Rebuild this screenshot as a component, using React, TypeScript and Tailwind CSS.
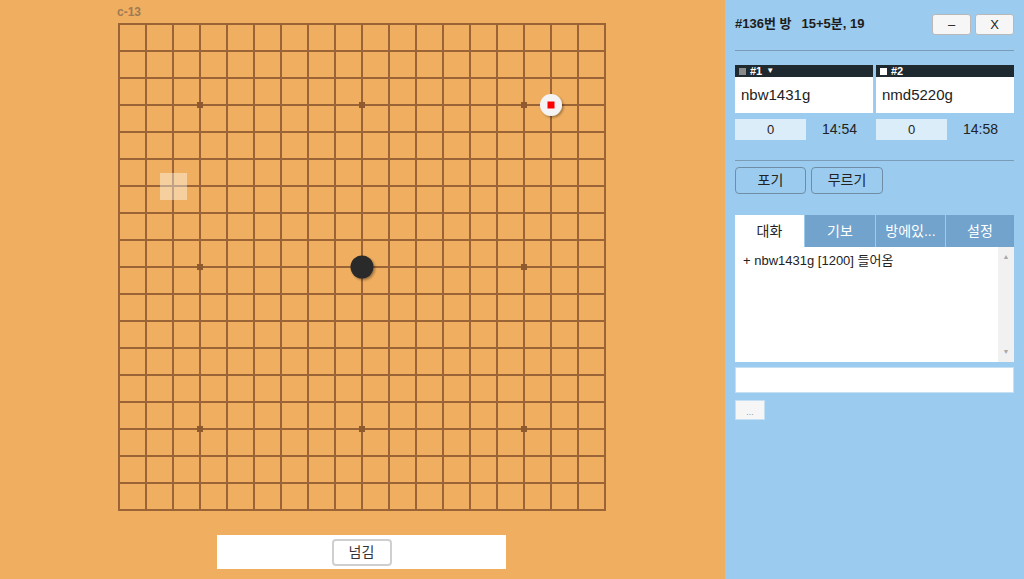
import React from "react";

const GAP = 27;
const OX = 10;
const OY = 5;
const N = 19;
const stars = [3, 9, 15];

function Board() {
  const lines = [];
  for (let i = 0; i < N; i++) {
    lines.push(
      <line key={"v" + i} x1={OX + i * GAP} y1={OY} x2={OX + i * GAP} y2={OY + 18 * GAP} />
    );
    lines.push(
      <line key={"h" + i} x1={OX} y1={OY + i * GAP} x2={OX + 18 * GAP} y2={OY + i * GAP} />
    );
  }
  const at = (i: number) => OX + i * GAP;
  const atY = (j: number) => OY + j * GAP;
  return (
    <svg width={506} height={501} className="block">
      <defs>
        <filter id="sh" x="-50%" y="-50%" width="200%" height="200%">
          <feDropShadow dx="1.5" dy="1.5" stdDeviation="1" floodColor="#000" floodOpacity="0.35" />
        </filter>
      </defs>
      <g stroke="#9a6436" strokeWidth={2} strokeLinecap="square">
        {lines}
      </g>
      {stars.map((a) =>
        stars.map((b) => (
          <rect key={a + "-" + b} x={at(a) - 3} y={atY(b) - 3} width={6} height={6} fill="#8f5a2e" />
        ))
      )}
      {/* hover square */}
      <rect x={at(2) - 13} y={atY(6) - 13} width={27} height={27} fill="#ffffff" fillOpacity={0.4} />
      {/* black stone */}
      <circle cx={at(9)} cy={atY(9)} r={11.5} fill="#2b2b2b" filter="url(#sh)" />
      {/* white stone with last-move marker */}
      <circle cx={at(16)} cy={atY(3)} r={11} fill="#f4f4f4" filter="url(#sh)" />
      <rect x={at(16) - 3.5} y={atY(3) - 3.5} width={7} height={7} fill="#ff0000" />
    </svg>
  );
}

function PlayerBox({ no, name, dark }: { no: string; name: string; dark: boolean }) {
  return (
    <div className="w-[138px] bg-white">
      <div className="h-[12px] bg-[#1f2a30] flex items-center gap-[4px] px-[4px] text-[11px] leading-[12px] font-bold text-white">
        <span className={"inline-block w-[7px] h-[7px] " + (dark ? "bg-[#8a8a8a]" : "bg-white")} />
        <span>{no}</span>
        {dark && <span className="text-[8px]">▼</span>}
      </div>
      <div className="h-[36px] flex items-center px-[6px] text-[15px] text-[#222]">{name}</div>
    </div>
  );
}

function ScoreRow({ time }: { time: string }) {
  return (
    <div className="w-[138px] flex items-center">
      <div className="w-[71px] h-[21px] bg-[#dcedfa] flex items-center justify-center text-[13px] text-[#222]">0</div>
      <div className="flex-1 text-center text-[14px] text-[#222]">{time}</div>
    </div>
  );
}

export default function App() {
  return (
    <div
      className="w-[1024px] h-[579px] flex overflow-hidden"
      style={{ fontFamily: '"Liberation Sans", "Noto Sans CJK KR", sans-serif' }}
    >
      {/* 바둑판 */}
      <div className="w-[725px] h-full bg-[#f0af60] flex flex-col">
        <div className="h-[19px] pt-[5px] pl-[117px] text-[12px] leading-[14px] font-bold text-[#9e7a55]">c-13</div>
        <div className="ml-[109px]">
          <Board />
        </div>
        <div className="ml-[217px] mt-[15px] w-[289px] h-[34px] bg-white flex items-center justify-center">
          <button className="w-[60px] h-[27px] border-2 border-[#cfcfcf] rounded-[4px] bg-white text-[14px] text-[#333]">
            넘김
          </button>
        </div>
      </div>

      {/* 사이드 패널 */}
      <div className="flex-1 h-full bg-[#9bcbee] px-[10px]">
        <div className="h-[51px] flex items-center justify-between border-b border-[#7b9cb6] pb-[2px]">
          <div className="text-[13px] font-bold text-[#1d1d1d]">
            #136번 방<span className="ml-[10px]">15+5분, 19</span>
          </div>
          <div className="flex gap-[4px]">
            <button className="w-[39px] h-[21px] bg-[#f6f6f6] border border-[#b8b8b8] rounded-[3px] text-[13px] text-[#222]">–</button>
            <button className="w-[39px] h-[21px] bg-[#f6f6f6] border border-[#b8b8b8] rounded-[3px] text-[13px] text-[#222]">X</button>
          </div>
        </div>

        <div className="mt-[14px] flex gap-[3px]">
          <PlayerBox no="#1" name="nbw1431g" dark />
          <PlayerBox no="#2" name="nmd5220g" dark={false} />
        </div>
        <div className="mt-[6px] flex gap-[3px]">
          <ScoreRow time="14:54" />
          <ScoreRow time="14:58" />
        </div>

        <div className="mt-[20px] border-t border-[#7b9cb6]" />
        <div className="mt-[6px] flex gap-[5px]">
          <button className="w-[71px] h-[27px] border border-[#6f8ea6] rounded-[4px] text-[14px] text-[#222]">포기</button>
          <button className="w-[72px] h-[27px] border border-[#6f8ea6] rounded-[4px] text-[14px] text-[#222]">무르기</button>
        </div>

        <div className="mt-[21px] flex h-[32px] text-[14px]">
          <div className="w-[69px] bg-white flex items-center justify-center text-[#222]">대화</div>
          <div className="w-[70px] ml-[1px] bg-[#72a3cc] flex items-center justify-center text-white">기보</div>
          <div className="w-[69px] ml-[1px] bg-[#72a3cc] flex items-center justify-center text-white">방에있...</div>
          <div className="flex-1 ml-[1px] bg-[#72a3cc] flex items-center justify-center text-white">설정</div>
        </div>
        <div className="h-[115px] bg-white flex">
          <div className="flex-1 pl-[8px] pt-[4px] text-[13px] text-[#222]">+ nbw1431g [1200] 들어옴</div>
          <div className="w-[16px] bg-[#f1f1f1] flex flex-col justify-between items-center py-[6px]">
            <span className="text-[7px] leading-[8px] text-[#a8a8a8]">▲</span>
            <span className="text-[7px] leading-[8px] text-[#a8a8a8]">▼</span>
          </div>
        </div>

        <div className="mt-[5px] h-[26px] bg-white border border-[#c6e0f3]" />
        <div className="mt-[7px] w-[30px] h-[20px] bg-[#f6f6f6] border border-[#c6e0f3] flex items-end justify-center pb-[2px] text-[9px] leading-[9px] text-[#999]">
          ...
        </div>
      </div>
    </div>
  );
}
